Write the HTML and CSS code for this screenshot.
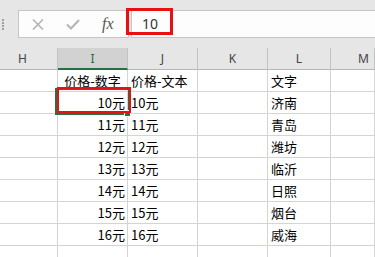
FILE: index.html
```html
<!DOCTYPE html>
<html lang="zh-CN">
<head>
  <meta charset="UTF-8">
  <title>价格</title>
  <link rel="stylesheet" href="styles.css">
</head>
<body>
  <!-- Formula bar -->
  <div class="toolbar">
    <div class="grip"><i></i><i></i><i></i><i></i></div>
    <div class="fbtns">
      <svg class="ico-x" width="12" height="11" viewBox="0 0 12 11"><path d="M1 0.5 L11 10.5 M11 0.5 L1 10.5" stroke="#b4b4b4" stroke-width="1.6" fill="none"/></svg>
      <svg class="ico-ok" width="14" height="11" viewBox="0 0 14 11"><path d="M1 5.5 L5 9.5 L13 1" stroke="#b4b4b4" stroke-width="2" fill="none"/></svg>
      <span class="fx">fx</span>
    </div>
    <div class="fbox">10</div>
    <span class="mark mark-formula"></span>
  </div>

  <!-- Sheet -->
  <div class="sheet">
    <div class="hd">H</div><div class="hd hd-on">I</div><div class="hd">J</div><div class="hd">K</div><div class="hd">L</div><div class="hd hd-m">M</div>

    <div class="c"></div><div class="c mid">价格-数字</div><div class="c">价格-文本</div><div class="c"></div><div class="c">文字</div><div class="c"></div>
    <div class="c"></div><div class="c num">10元</div><div class="c">10元</div><div class="c"></div><div class="c">济南</div><div class="c"></div>
    <div class="c"></div><div class="c num">11元</div><div class="c">11元</div><div class="c"></div><div class="c">青岛</div><div class="c"></div>
    <div class="c"></div><div class="c num">12元</div><div class="c">12元</div><div class="c"></div><div class="c">潍坊</div><div class="c"></div>
    <div class="c"></div><div class="c num">13元</div><div class="c">13元</div><div class="c"></div><div class="c">临沂</div><div class="c"></div>
    <div class="c"></div><div class="c num">14元</div><div class="c">14元</div><div class="c"></div><div class="c">日照</div><div class="c"></div>
    <div class="c"></div><div class="c num">15元</div><div class="c">15元</div><div class="c"></div><div class="c">烟台</div><div class="c"></div>
    <div class="c"></div><div class="c num">16元</div><div class="c">16元</div><div class="c"></div><div class="c">威海</div><div class="c"></div>
    <div class="c"></div><div class="c"></div><div class="c"></div><div class="c"></div><div class="c"></div><div class="c"></div>

    <span class="sel"><i class="handle"></i></span>
    <span class="mark mark-cell"></span>
  </div>
</body>
</html>
```

FILE: styles.css
```css
html, body {margin:0; padding:0;}
body {width:375px; height:257px; overflow:hidden; background:#fff; font-family:"Noto Sans CJK SC", "Noto Sans", sans-serif; color:#000;}

/* Formula bar */
.toolbar {position:relative; height:48px; background:#e6e6e6; display:flex; align-items:flex-start; padding-top:10px; box-sizing:border-box;}
.grip {width:18px; display:flex; flex-direction:column; gap:1px; padding:9px 0 0 2px; box-sizing:border-box;}
.grip i {width:2px; height:2px; background:#a0a0a0;}
.fbtns {width:111px; height:28px; box-sizing:border-box; background:#fdfdfd; border:1px solid #c6c6c6; display:flex; align-items:center; margin-right:2px;}
.ico-x {margin-left:13px; margin-top:1px;}
.ico-ok {margin-left:22px; margin-top:1px;}
.fx {margin-left:22px; font-family:"Liberation Serif", serif; font-style:italic; font-size:16px; color:#555; line-height:1;}
.fbox {flex:1; height:28px; box-sizing:border-box; background:#fdfdfd; border:1px solid #c6c6c6; border-right:none; padding-left:10px; font-family:"Noto Sans", sans-serif; font-size:14px; line-height:25px; color:#333;}

/* Annotation boxes */
.mark {position:absolute; border:2px solid #e81010; box-sizing:border-box;}
.mark-formula {left:126px; top:8px; width:47px; height:27px; border-width:3px;}

/* Sheet grid */
.sheet {position:relative; margin-left:-12px; display:grid; grid-template-columns:70px 70px 70px 70px 63px 44px; grid-auto-rows:22px; font-size:13px;}
.hd {background:#e6e6e6; border-right:1px solid #c2c2c2; border-bottom:1px solid #b6b6b6; box-sizing:border-box; text-align:center; font-family:"Noto Sans", sans-serif; font-size:12px; line-height:21px; color:#444;}
.hd-on {background:#d2d2d2; color:#1f6b40; border-bottom:2px solid #217346;}
.hd-m {text-align:left; padding-left:27px;}
.c {border-right:1px solid #d4d4d4; border-bottom:1px solid #d4d4d4; box-sizing:border-box; padding:0 3px; line-height:21px; white-space:nowrap;}
.c.num {text-align:right; padding-right:2px;}
.c.mid {text-align:center; padding:0;}

/* Selected cell */
.sel {position:absolute; left:67px; top:40px; width:75px; height:27px; border:2px solid #217346; box-sizing:border-box;}
.handle {position:absolute; right:-3px; bottom:-4px; width:5px; height:5px; background:#217346; border:1px solid #fff;}
.mark-cell {left:69px; top:39px; width:74px; height:26px;}
```
